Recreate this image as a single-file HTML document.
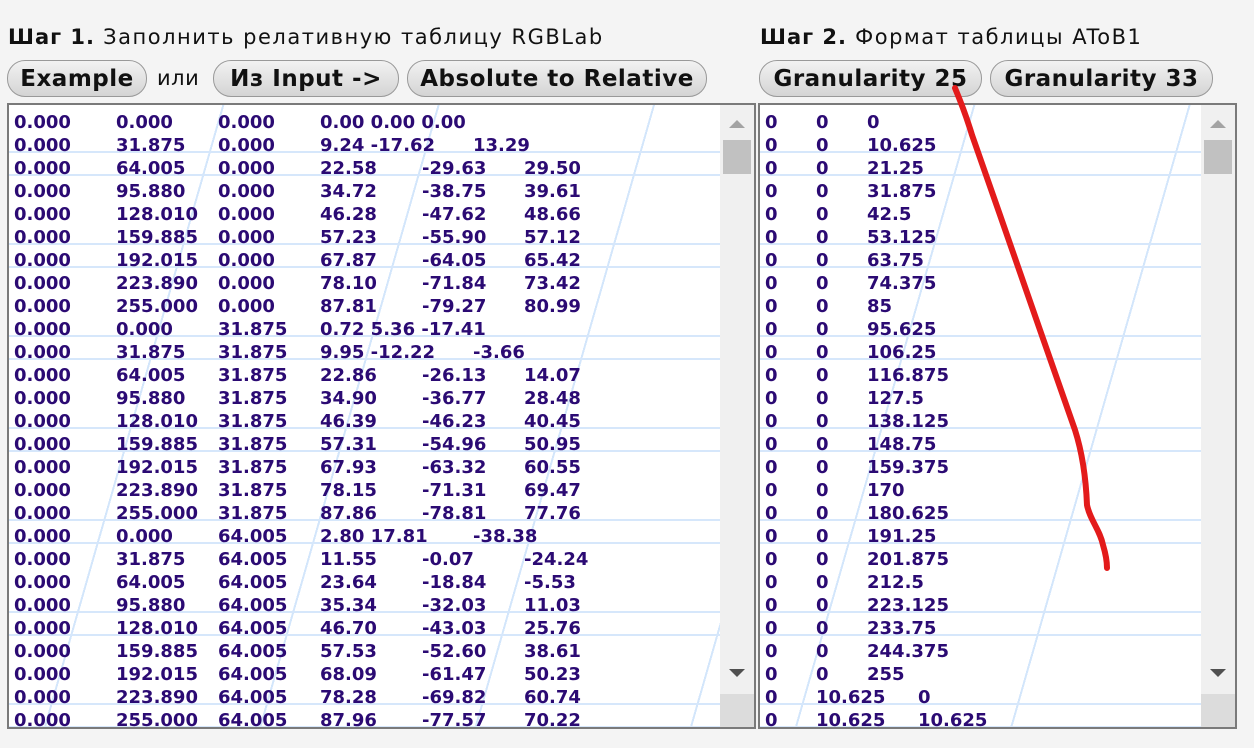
<!DOCTYPE html>
<html><head><meta charset="utf-8"><style>
body{margin:0;width:1254px;height:748px;background:#f4f4f4;font-family:"DejaVu Sans",Verdana,sans-serif;position:relative;overflow:hidden}
.h{position:absolute;top:25px;font-size:21px;letter-spacing:1.5px;color:#111;white-space:nowrap}
.h b{font-weight:bold;letter-spacing:1px}
.btn{position:absolute;top:60px;height:37px;border:1.5px solid #999;border-radius:18px;background:linear-gradient(#f2f2f2,#d4d4d4);font-weight:bold;font-size:23px;letter-spacing:0.5px;line-height:36px;text-align:center;color:#111;box-sizing:border-box;white-space:nowrap}
.ta{position:absolute;top:103px;height:626px;border:2px solid #7a7a7a;box-sizing:border-box;background:#fff;overflow:hidden}
.bg{position:absolute;left:0;top:0;right:34px;bottom:0;
background:repeating-linear-gradient(180deg,transparent 0,transparent 46px,#d6e7fb 46px,#d6e7fb 48px,transparent 48px,transparent 69px,#d6e7fb 69px,#d6e7fb 71px,transparent 71px,transparent 92px),
repeating-linear-gradient(106deg,transparent 0,transparent 205px,#d3e6fb 205px,#d3e6fb 207px);}
pre{position:absolute;left:5px;top:6px;margin:0;font-family:"DejaVu Sans",Verdana,sans-serif;font-weight:bold;font-size:18px;line-height:23px;color:#2b0a73;tab-size:51px;-moz-tab-size:51px}
.sb{position:absolute;right:0;top:0;width:34px;bottom:0;background:#f0f0f0}
.up{position:absolute;left:9px;top:15px;width:0;height:0;border-left:8px solid transparent;border-right:8px solid transparent;border-bottom:8px solid #a3a3a3}
.dn{position:absolute;left:9px;bottom:50px;width:0;height:0;border-left:8px solid transparent;border-right:8px solid transparent;border-top:8px solid #505050}
.th{position:absolute;left:3px;top:35px;width:28px;height:34px;background:#c1c1c1}
.cr{position:absolute;left:0;bottom:0;width:34px;height:33px;background:#dcdcdc}
</style></head><body>
<div class="h" style="left:8px"><b>Шаг 1.</b> Заполнить релативную таблицу RGBLab</div>
<div class="h" style="left:760px"><b>Шаг 2.</b> Формат таблицы AToB1</div>
<div class="btn" style="left:7px;width:140px">Example</div>
<div class="h" style="left:157px;top:66px;font-size:21px;letter-spacing:0.5px">или</div>
<div class="btn" style="left:213px;width:186px">Из Input -&gt;</div>
<div class="btn" style="left:407px;width:300px">Absolute to Relative</div>
<div class="btn" style="left:759px;width:223px">Granularity 25</div>
<div class="btn" style="left:990px;width:223px">Granularity 33</div>

<div class="ta" style="left:7px;width:749px"><div class="bg"></div>
<pre>0.000	0.000	0.000	0.00 0.00 0.00
0.000	31.875	0.000	9.24 -17.62	13.29
0.000	64.005	0.000	22.58	-29.63	29.50
0.000	95.880	0.000	34.72	-38.75	39.61
0.000	128.010	0.000	46.28	-47.62	48.66
0.000	159.885	0.000	57.23	-55.90	57.12
0.000	192.015	0.000	67.87	-64.05	65.42
0.000	223.890	0.000	78.10	-71.84	73.42
0.000	255.000	0.000	87.81	-79.27	80.99
0.000	0.000	31.875	0.72 5.36 -17.41
0.000	31.875	31.875	9.95 -12.22	-3.66
0.000	64.005	31.875	22.86	-26.13	14.07
0.000	95.880	31.875	34.90	-36.77	28.48
0.000	128.010	31.875	46.39	-46.23	40.45
0.000	159.885	31.875	57.31	-54.96	50.95
0.000	192.015	31.875	67.93	-63.32	60.55
0.000	223.890	31.875	78.15	-71.31	69.47
0.000	255.000	31.875	87.86	-78.81	77.76
0.000	0.000	64.005	2.80 17.81	-38.38
0.000	31.875	64.005	11.55	-0.07	-24.24
0.000	64.005	64.005	23.64	-18.84	-5.53
0.000	95.880	64.005	35.34	-32.03	11.03
0.000	128.010	64.005	46.70	-43.03	25.76
0.000	159.885	64.005	57.53	-52.60	38.61
0.000	192.015	64.005	68.09	-61.47	50.23
0.000	223.890	64.005	78.28	-69.82	60.74
0.000	255.000	64.005	87.96	-77.57	70.22</pre>
<div class="sb"><div class="up"></div><div class="th"></div><div class="dn"></div><div class="cr"></div></div></div>

<div class="ta" style="left:758px;width:479px"><div class="bg"></div>
<pre>0	0	0
0	0	10.625
0	0	21.25
0	0	31.875
0	0	42.5
0	0	53.125
0	0	63.75
0	0	74.375
0	0	85
0	0	95.625
0	0	106.25
0	0	116.875
0	0	127.5
0	0	138.125
0	0	148.75
0	0	159.375
0	0	170
0	0	180.625
0	0	191.25
0	0	201.875
0	0	212.5
0	0	223.125
0	0	233.75
0	0	244.375
0	0	255
0	10.625	0
0	10.625	10.625</pre>
<div class="sb"><div class="up"></div><div class="th"></div><div class="dn"></div><div class="cr"></div></div></div>

<svg style="position:absolute;left:0;top:0" width="1254" height="748"><path d="M955 88 C960 100 966 115 972 135 L1000 215 L1040 330 L1075 430 C1083 455 1086 480 1087 505 C1090 520 1100 530 1103 545 C1106 555 1107 562 1107 568" fill="none" stroke="#e31b1b" stroke-width="6" stroke-linecap="round"/></svg>
</body></html>
